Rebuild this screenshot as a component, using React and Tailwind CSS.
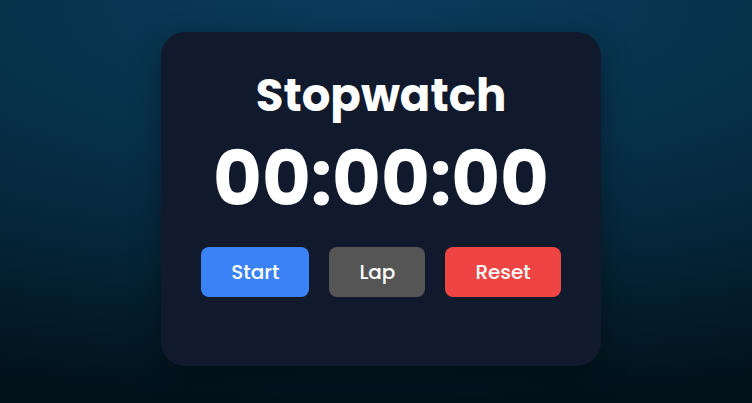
import React, { useEffect, useRef, useState } from 'react';

function pad(n) {
  return String(n).padStart(2, '0');
}

export default function App() {
  const [elapsed, setElapsed] = useState(0);
  const [running, setRunning] = useState(false);
  const [laps, setLaps] = useState([]);
  const timer = useRef(null);

  useEffect(() => {
    if (!running) return;
    timer.current = setInterval(() => setElapsed((t) => t + 1), 10);
    return () => clearInterval(timer.current);
  }, [running]);

  const minutes = Math.floor(elapsed / 6000);
  const seconds = Math.floor((elapsed % 6000) / 100);
  const hundredths = elapsed % 100;
  const display = `${pad(minutes)}:${pad(seconds)}:${pad(hundredths)}`;

  return (
    <div
      className="min-h-screen w-full flex justify-center items-start pt-8 pl-[10px] bg-[radial-gradient(ellipse_140%_100%_at_50%_0%,#0a3b5b_0%,#07314b_40%,#052639_65%,#02121b_100%)]"
      style={{ fontFamily: 'Poppins, Inter, "Noto Sans", sans-serif' }}
    >
      <div className="w-[440px] h-[334px] rounded-3xl bg-[#111a2c] shadow-[0_10px_30px_rgba(0,0,0,0.35)] flex flex-col items-center pt-[31px]">
        <h1 className="text-[45px] leading-[66px] font-bold text-white">Stopwatch</h1>
        <div className="mt-[10px] text-[75px] leading-[80px] font-bold text-white">{display}</div>
        <div className="mt-[28px] flex gap-5">
          <button
            type="button"
            onClick={() => setRunning((r) => !r)}
            className="px-[30px] py-3 rounded-lg bg-[#3b82f6] text-white text-xl leading-[26px] font-medium"
          >
            {running ? 'Stop' : 'Start'}
          </button>
          <button
            type="button"
            onClick={() => running && setLaps((l) => [display, ...l])}
            className="px-[30px] py-3 rounded-lg bg-[#555555] text-white text-xl leading-[26px] font-medium"
          >
            Lap
          </button>
          <button
            type="button"
            onClick={() => {
              setRunning(false);
              setElapsed(0);
              setLaps([]);
            }}
            className="px-[30px] py-3 rounded-lg bg-[#ef4444] text-white text-xl leading-[26px] font-medium"
          >
            Reset
          </button>
        </div>
        {laps.length > 0 && (
          <ul className="mt-4 text-sm text-gray-300">
            {laps.map((lap, i) => (
              <li key={i}>
                Lap {laps.length - i}: {lap}
              </li>
            ))}
          </ul>
        )}
      </div>
    </div>
  );
}
